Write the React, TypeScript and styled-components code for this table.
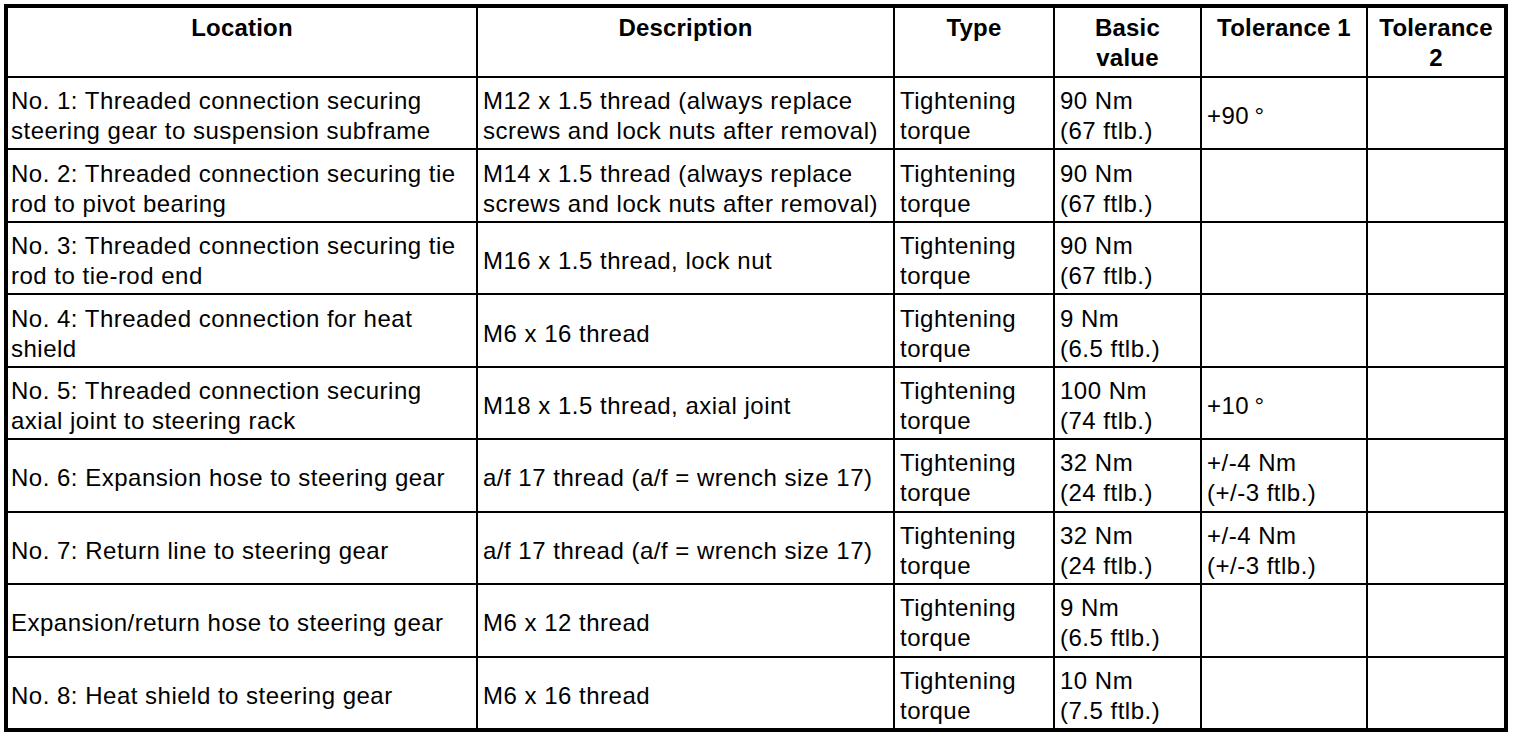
import React, { FC } from "react";
import styled, { createGlobalStyle } from "styled-components";

const GlobalStyle = createGlobalStyle`
    html, body {
        margin: 0;
        padding: 0;
        background: #ffffff;
    }
    body {
        padding: 4px;
        font-family: "Liberation Sans", Arial, Helvetica, sans-serif;
        color: #000000;
    }
`;

// one row = six cells, each cell holds its lines of text
type Cell = string[];
type Row = Cell[];

const TORQUE: Cell = ["Tightening", "torque"];

const rows: Row[] = [
    [
        ["No. 1: Threaded connection securing", "steering gear to suspension subframe"],
        ["M12 x 1.5 thread (always replace", "screws and lock nuts after removal)"],
        TORQUE,
        ["90 Nm", "(67 ftlb.)"],
        ["+90\u2009°"],
        [],
    ],
    [
        ["No. 2: Threaded connection securing tie", "rod to pivot bearing"],
        ["M14 x 1.5 thread (always replace", "screws and lock nuts after removal)"],
        TORQUE,
        ["90 Nm", "(67 ftlb.)"],
        [],
        [],
    ],
    [
        ["No. 3: Threaded connection securing tie", "rod to tie-rod end"],
        ["M16 x 1.5 thread, lock nut"],
        TORQUE,
        ["90 Nm", "(67 ftlb.)"],
        [],
        [],
    ],
    [
        ["No. 4: Threaded connection for heat", "shield"],
        ["M6 x 16 thread"],
        TORQUE,
        ["9 Nm", "(6.5 ftlb.)"],
        [],
        [],
    ],
    [
        ["No. 5: Threaded connection securing", "axial joint to steering rack"],
        ["M18 x 1.5 thread, axial joint"],
        TORQUE,
        ["100 Nm", "(74 ftlb.)"],
        ["+10\u2009°"],
        [],
    ],
    [
        ["No. 6: Expansion hose to steering gear"],
        ["a/f 17 thread (a/f = wrench size 17)"],
        TORQUE,
        ["32 Nm", "(24 ftlb.)"],
        ["+/-4 Nm", "(+/-3 ftlb.)"],
        [],
    ],
    [
        ["No. 7: Return line to steering gear"],
        ["a/f 17 thread (a/f = wrench size 17)"],
        TORQUE,
        ["32 Nm", "(24 ftlb.)"],
        ["+/-4 Nm", "(+/-3 ftlb.)"],
        [],
    ],
    [
        ["Expansion/return hose to steering gear"],
        ["M6 x 12 thread"],
        TORQUE,
        ["9 Nm", "(6.5 ftlb.)"],
        [],
        [],
    ],
    [
        ["No. 8: Heat shield to steering gear"],
        ["M6 x 16 thread"],
        TORQUE,
        ["10 Nm", "(7.5 ftlb.)"],
        [],
        [],
    ],
];

const headers: Cell[] = [
    ["Location"],
    ["Description"],
    ["Type"],
    ["Basic", "value"],
    ["Tolerance 1"],
    ["Tolerance", "2"],
];

// left inset of the text per column
const insets = [3, 5, 5, 5, 5, 5];

const Sheet = styled.div`
    box-sizing: border-box;
    width: 1504px;
    height: 728px;
    border: 4px solid #000000;
    background: #000000;
    display: grid;
    grid-template-columns: 468px 415px 158px 145px 164px 136px;
    grid-template-rows: 68px repeat(9, 1fr);
    gap: 2px;
`;

const HeadCell = styled.div`
    background: #ffffff;
    display: flex;
    flex-direction: column;
    align-items: center;
    justify-content: flex-start;
    padding-top: 5px;
    font-weight: bold;
    font-size: 24px;
    line-height: 30px;
    letter-spacing: 0.2px;
    text-align: center;
`;

const BodyCell = styled.div<{ $inset: number }>`
    background: #ffffff;
    display: flex;
    flex-direction: column;
    justify-content: center;
    align-items: flex-start;
    padding-left: ${(p) => p.$inset}px;
    padding-top: 6px;
    font-size: 24px;
    line-height: 30px;
    letter-spacing: 0.5px;
    overflow: hidden;
`;

const Line = styled.span`
    white-space: nowrap;
`;

const TorqueTable: FC = () => (
    <Sheet>
        {headers.map((h, i) => (
            <HeadCell key={"h" + i}>
                {h.map((l, j) => (
                    <Line key={j}>{l}</Line>
                ))}
            </HeadCell>
        ))}
        {rows.map((row, r) =>
            row.map((cell, c) => (
                <BodyCell key={r + "-" + c} $inset={insets[c]}>
                    {cell.map((l, j) => (
                        <Line key={j}>{l}</Line>
                    ))}
                </BodyCell>
            ))
        )}
    </Sheet>
);

const App: FC = () => (
    <>
        <GlobalStyle />
        <TorqueTable />
    </>
);

export default App;
